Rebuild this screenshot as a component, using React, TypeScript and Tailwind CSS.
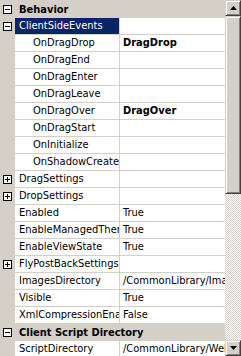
import React from 'react';

type Row =
  | { kind: 'cat'; label: string; open?: boolean }
  | { kind: 'prop'; label: string; value?: string; bold?: boolean; sub?: boolean; box?: 'plus' | 'minus'; selected?: boolean };

const rows: Row[] = [
  { kind: 'cat', label: 'Behavior' },
  { kind: 'prop', label: 'ClientSideEvents', box: 'minus', selected: true },
  { kind: 'prop', label: 'OnDragDrop', value: 'DragDrop', bold: true, sub: true },
  { kind: 'prop', label: 'OnDragEnd', sub: true },
  { kind: 'prop', label: 'OnDragEnter', sub: true },
  { kind: 'prop', label: 'OnDragLeave', sub: true },
  { kind: 'prop', label: 'OnDragOver', value: 'DragOver', bold: true, sub: true },
  { kind: 'prop', label: 'OnDragStart', sub: true },
  { kind: 'prop', label: 'OnInitialize', sub: true },
  { kind: 'prop', label: 'OnShadowCreate', sub: true },
  { kind: 'prop', label: 'DragSettings', box: 'plus' },
  { kind: 'prop', label: 'DropSettings', box: 'plus' },
  { kind: 'prop', label: 'Enabled', value: 'True' },
  { kind: 'prop', label: 'EnableManagedThemes', value: 'True' },
  { kind: 'prop', label: 'EnableViewState', value: 'True' },
  { kind: 'prop', label: 'FlyPostBackSettings', box: 'plus' },
  { kind: 'prop', label: 'ImagesDirectory', value: '/CommonLibrary/Images/' },
  { kind: 'prop', label: 'Visible', value: 'True' },
  { kind: 'prop', label: 'XmlCompressionEnabled', value: 'False' },
  { kind: 'cat', label: 'Client Script Directory' },
  { kind: 'prop', label: 'ScriptDirectory', value: '/CommonLibrary/WebControls/' },
];

const Box: React.FC<{ type: 'plus' | 'minus' }> = ({ type }) => (
  <svg width="9" height="9" viewBox="0 0 9 9" className="block">
    <rect x="0.5" y="0.5" width="8" height="8" fill="#fff" stroke="#000" />
    <path d="M2 4.5h5" stroke="#000" />
    {type === 'plus' && <path d="M4.5 2v5" stroke="#000" />}
  </svg>
);

const Arrow: React.FC<{ down?: boolean }> = ({ down }) => (
  <svg width="7" height="4" viewBox="0 0 7 4" className="block">
    <path d={down ? 'M0 0h7L3.5 4z' : 'M3.5 0L7 4H0z'} fill="#000" />
  </svg>
);

const btn = 'flex h-[16px] items-center justify-center bg-[#d4d0c8] border-t border-l border-t-[#d4d0c8] border-l-[#d4d0c8] border-r border-b border-r-[#404040] border-b-[#404040] shadow-[inset_1px_1px_#fff,inset_-1px_-1px_#808080]';

export default function App() {
  return (
    <div className="flex h-[356px] w-[241px] overflow-hidden bg-[#d4d0c8] font-['DejaVu_Sans_Condensed','DejaVu_Sans',sans-serif] text-[11px] leading-[16px] text-black">
      <div className="w-[225px] shrink-0 pt-px">
        {rows.map((r, i) =>
          r.kind === 'cat' ? (
            <div key={i} className="flex h-[17px] items-center bg-[#d4d0c8]">
              <div className="flex w-[15px] shrink-0 justify-center">
                <Box type="minus" />
              </div>
              <div className="whitespace-nowrap pl-[4px] font-bold">{r.label}</div>
            </div>
          ) : (
            <div key={i} className="flex h-[17px]">
              <div className="flex w-[15px] shrink-0 items-center justify-center bg-[#d4d0c8] pb-px">
                {r.box && <Box type={r.box} />}
              </div>
              <div
                className={`w-[105px] shrink-0 overflow-hidden whitespace-nowrap border-r border-b border-[#d4d0c8] ${r.sub ? 'pl-[18px]' : 'pl-[4px]'} ${r.selected ? 'bg-[#0a246a] text-white' : 'bg-white'}`}
              >
                {r.label}
              </div>
              <div className={`min-w-0 flex-1 overflow-hidden whitespace-nowrap border-b border-[#d4d0c8] bg-white pl-[3px] ${r.bold ? 'font-bold' : ''}`}>
                {r.value}
              </div>
            </div>
          )
        )}
      </div>
      <div className="flex w-[16px] shrink-0 flex-col">
        <div className={btn}>
          <Arrow />
        </div>
        <div className="h-[178px] shrink-0 border-t border-l border-t-[#d4d0c8] border-l-[#d4d0c8] border-r border-b border-r-[#404040] border-b-[#404040] bg-[#d4d0c8] shadow-[inset_1px_1px_#fff,inset_-1px_-1px_#808080]" />
        <div className="flex-1 bg-[repeating-conic-gradient(#d4d0c8_0_25%,#fff_0_50%)] bg-[length:2px_2px]" />
        <div className={btn}>
          <Arrow down />
        </div>
      </div>
    </div>
  );
}
